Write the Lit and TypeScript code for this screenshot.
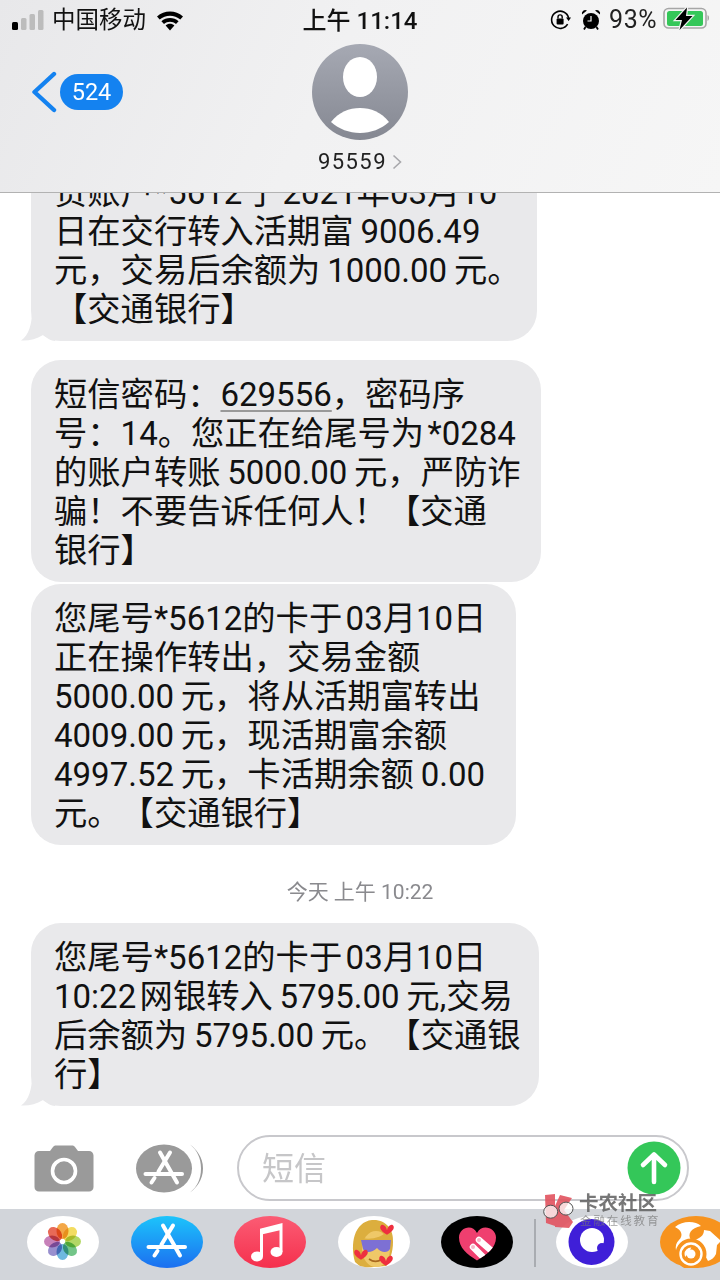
import { LitElement, html, css, svg } from "lit";
import { customElement } from "lit/decorators.js";

const H = "\u200A";
const T = "\u2009";

const tail = html`<svg class="tail" viewBox="0 0 34 30"><path d="M11 0C11 13 8 24 0 29.5C8 30 15 28 22 24C26 27 30 30 34 30V0Z" fill="#e9e9eb"/></svg>`;

const appStoreGlyph = (c: string) => svg`<g stroke="${c}" stroke-width="4" stroke-linecap="round" fill="none"><path d="M32 9.500L49 39.500"/><path d="M42 9.500L30.500 28.500"/><path d="M26.500 35L23.500 39.500"/><path d="M17.500 31H54"/></g>`;

const petals = ["#f29b2e", "#f2d84b", "#a8d24f", "#5fbd78", "#5aaedb", "#8a80c8", "#c070b0", "#e5553f"];

const heart = (x: number, y: number, s: number) => svg`<path transform="translate(${x} ${y}) scale(${s})" d="M0 6C-1-1-7-4-9 0C-11 4-6 9 0 12C6 9 11 4 9 0C7-4 1-1 0 6Z" fill="#ee2f3f"/>`;

/* Latin runs are set a little smaller than the CJK text around them, as on the phone. */
const runs = (text: string) =>
  text.split(/([0-9*.:,]+)/).map((part, i) => (i % 2 ? html`<span class="n">${part}</span>` : part));

@customElement("app-root")
export class AppRoot extends LitElement {
  static styles = css`
    :host { display: block; width: 720px; height: 1280px; overflow: hidden; position: relative; background: #fff; font-family: Roboto, "Noto Sans CJK SC", sans-serif; color: #111; text-spacing-trim: space-all; }
    .header { height: 192px; border-bottom: 1px solid #b2b2b2; background: linear-gradient(115deg, #e8e8ea 0%, #f1f1f2 45%, #f6f6f6 100%); display: flex; flex-direction: column; }
    .status { height: 36px; display: grid; grid-template-columns: 1fr auto 1fr; align-items: center; padding: 0 12px; font-size: 24px; }
    .s-left, .s-right { display: flex; align-items: center; }
    .s-left svg, .lock, .alarm { margin-top: 3px; }
    .s-right { justify-content: flex-end; }
    .carrier { margin: 0 10px 0 8px; font-size: 23.5px; }
    .time { font-size: 24px; font-weight: 500; }
    .pct { font-size: 25px; letter-spacing: 0.5px; margin: 3px 5px 0 8px; color: #222; }
    .lock { margin-right: 10px; }
    .battery { margin-right: -1px; }
    .nav { display: grid; grid-template-columns: 1fr auto 1fr; margin-top: 8px; padding: 0 20px; }
    .back { display: flex; align-items: center; height: 96px; gap: 3px; padding-left: 11px; }
    .badge { background: #1482f0; color: #fff; border-radius: 18px; width: 63px; height: 36px; display: flex; align-items: center; justify-content: center; font-size: 23.5px; }
    .contact { display: flex; flex-direction: column; align-items: center; }
    .avatar { display: block; }
    .name { font-size: 22px; margin-top: 10px; line-height: 24px; display: flex; align-items: center; gap: 5px; color: #222; letter-spacing: 1.4px; }
    .thread { height: 929px; overflow: hidden; padding-left: 31px; display: flex; flex-direction: column; align-items: flex-start; }
    .bubble { position: relative; background: #e9e9eb; border-radius: 30px; padding: 15px 0 12px 23px; font-size: 33.3px; line-height: 39px; white-space: nowrap; box-sizing: border-box; flex: none; }
    .bubble span.l { display: block; height: 39px; }
    .n { font-size: 33px; }
    .w1 { width: 506px; }
    .w2 { width: 510px; }
    .w3 { width: 485px; }
    .w4 { width: 508px; }
    .u { text-decoration: underline; text-decoration-color: #999; text-underline-offset: 4px; text-decoration-thickness: 1.5px; }
    .tail { position: absolute; left: -10px; bottom: 0; width: 34px; height: 30px; }
    .first { margin-top: -35px; }
    .g19 { margin-top: 19px; }
    .g3 { margin-top: 2px; }
    .stamp { align-self: center; margin: 33px 0 17px -31px; height: 28px; line-height: 28px; font-size: 21px; color: #8a8a8e; }
    .compose { height: 87px; display: flex; align-items: flex-start; padding: 13px 0 0 34px; box-sizing: border-box; }
    .input { margin-left: 33px; width: 452px; height: 66px; border: 2px solid #c8c8cc; border-radius: 33px; box-sizing: border-box; display: flex; align-items: center; justify-content: space-between; padding: 0 6px 0 23px; font-size: 32px; color: #c6c6c8; }
    .input span { margin-top: -5px; }
    .compose .cam { margin-top: 10px; }
    .compose .store { margin: 9px 0 0 42px; }
    .dock { height: 71px; background: #d2d5da; display: flex; align-items: flex-start; padding: 7px 0 0 27px; gap: 31.5px; overflow: hidden; }
    .app { width: 72px; height: 52px; flex: none; display: block; }
    .sep { width: 2px; height: 48px; background: #a9acb1; margin: 3px -11px 0 -11px; flex: none; }
    .mark { position: absolute; left: 540px; top: 1193px; display: flex; gap: 3px; pointer-events: none; }
    .mark-text { display: flex; flex-direction: column; margin-top: 1px; }
    .mark-a { font-size: 19.5px; line-height: 20px; font-weight: 700; color: rgba(95, 95, 95, 0.85); }
    .mark-b { font-size: 11.5px; line-height: 14px; color: rgba(120, 120, 120, 0.7); letter-spacing: 1.9px; margin-left: 1px; }
  `;

  private bubble(lines: unknown[], cls: string, hasTail = false) {
    return html`<div class="bubble ${cls}">${lines.map((l) => html`<span class="l">${typeof l === "string" ? runs(l) : l}</span>`)}${hasTail ? tail : ""}</div>`;
  }

  render() {
    return html`
      <div class="header">
        <div class="status">
          <div class="s-left">
            <svg width="32" height="22" viewBox="0 0 32 22"><rect x="0" y="13" width="6" height="8" rx="1.5" fill="#000"/><rect x="9" y="9" width="5.5" height="12" rx="1.5" fill="#bcbcbc"/><rect x="17.5" y="5" width="5.5" height="16" rx="1.5" fill="#bcbcbc"/><rect x="26" y="1" width="5.5" height="20" rx="1.5" fill="#bcbcbc"/></svg>
            <span class="carrier">中国移动</span>
            <svg width="28" height="22" viewBox="0 0 28 22"><path d="M14 21.5L9.6 16.4C12 14.2 16 14.2 18.4 16.4Z" fill="#000"/><path d="M1 7.6C8.2 .8 19.8 .8 27 7.6L24.3 10.6C18.6 5.3 9.4 5.3 3.7 10.6Z" fill="#000"/><path d="M5.4 12.2C10.2 7.8 17.8 7.8 22.6 12.2L20 15.1C16.5 12 11.5 12 8 15.1Z" fill="#000"/></svg>
          </div>
          <div class="time">上午 11:14</div>
          <div class="s-right">
            <svg class="lock" width="21" height="22" viewBox="0 0 21 22"><path d="M17.6 15.2A8.6 8.6 0 1 1 18.6 9" fill="none" stroke="#000" stroke-width="1.6"/><path d="M16 8.4L21 8.4L18.6 12Z" fill="#000"/><rect x="6.6" y="9.4" width="7" height="6" rx="1" fill="#000"/><path d="M8 9.6V8a2.1 2.1 0 0 1 4.2 0V9.6" fill="none" stroke="#000" stroke-width="1.4"/></svg>
            <svg class="alarm" width="20" height="22" viewBox="0 0 20 22"><circle cx="10" cy="12" r="8" fill="#000"/><path d="M1 5.5A3.4 3.4 0 0 1 6 1.6ZM19 5.5A3.4 3.4 0 0 0 14 1.6Z" fill="#000"/><path d="M10 7V12H6.5" fill="none" stroke="#fff" stroke-width="1.2"/><path d="M4.5 18L3 20.5M15.5 18L17 20.5" stroke="#000" stroke-width="1.8"/></svg>
            <span class="pct">93%</span>
            <svg class="battery" width="47" height="24" viewBox="0 0 47 24"><rect x="2" y="2.500" width="42" height="19.500" rx="4.500" fill="none" stroke="#a6a6a6" stroke-width="1.6"/><rect x="5" y="5" width="36" height="15" rx="2.500" fill="#35c759"/><path d="M45.500 9V15C46.600 14.600 47 13.400 47 12C47 10.600 46.600 9.400 45.500 9Z" fill="#a6a6a6"/><path d="M25 1.500L13.500 14H20L17.500 24L30.500 10H24Z" fill="#000" stroke="#f2f2f2" stroke-width="2.400" paint-order="stroke"/></svg>
          </div>
        </div>
        <div class="nav">
          <div class="back">
            <svg width="26" height="42" viewBox="0 0 26 42"><path d="M23 3L3.5 21L23 39" fill="none" stroke="#1482f0" stroke-width="4.4" stroke-linecap="round" stroke-linejoin="round"/></svg>
            <div class="badge">524</div>
          </div>
          <div class="contact">
            <svg class="avatar" width="96" height="96" viewBox="0 0 96 96">
              <defs>
                <linearGradient id="av" x1="0" y1="0" x2="0" y2="1"><stop offset="0" stop-color="#a6a9b3"/><stop offset="1" stop-color="#858892"/></linearGradient>
                <clipPath id="avc"><circle cx="48" cy="48" r="48"/></clipPath>
              </defs>
              <circle cx="48" cy="48" r="48" fill="url(#av)"/>
              <ellipse cx="48" cy="33" rx="17" ry="20" fill="#fff"/>
              <path d="M19 78C27 68 37 64 48 64C59 64 69 68 77 78C69 85 59 89 48 89C37 89 27 85 19 78Z" fill="#fff" clip-path="url(#avc)"/>
            </svg>
            <div class="name">95559<svg width="10" height="16" viewBox="0 0 10 16"><path d="M1.5 1.5L8.5 8L1.5 14.5" fill="none" stroke="#a8a8ac" stroke-width="1.6"/></svg></div>
          </div>
          <div></div>
        </div>
      </div>
      <div class="thread">
        ${this.bubble([`贵账户*5612${H}于${H}2021年03月10`, `日在交行转入活期富${T}9006.49`, `元，交易后余额为${T}1000.00${T}元。`, "【交通银行】"], "first w1", true)}
        ${this.bubble([html`短信密码：<span class="u n">629556</span>，密码序`, `号：14。您正在给尾号为${H}*0284`, `的账户转账${T}5000.00${T}元，严防诈`, "骗！不要告诉任何人！【交通", "银行】"], "g19 w2")}
        ${this.bubble([`您尾号*5612的卡于${H}03月10日`, "正在操作转出，交易金额", `5000.00${T}元，将从活期富转出`, `4009.00${T}元，现活期富余额`, `4997.52${T}元，卡活期余额${T}0.00`, "元。【交通银行】"], "g3 w3")}
        <div class="stamp">今天 上午 10:22</div>
        ${this.bubble([`您尾号*5612的卡于${H}03月10日`, `10:22${H}网银转入${T}5795.00${T}元,交易`, `后余额为${T}5795.00${T}元。【交通银`, "行】"], "w4", true)}
      </div>
      <div class="compose">
        <svg class="cam" width="60" height="48" viewBox="0 0 60 48"><path d="M5 6H16L19 2C20 .8 21 .5 22 .5H38C39 .5 40 .8 41 2L44 6H55C57.5 6 59.5 8 59.5 10.5V42C59.5 44.8 57.5 46.5 55 46.5H5C2.5 46.5 .5 44.8 .5 42V10.5C.5 8 2.5 6 5 6Z" fill="#9a9a9a"/><circle cx="30" cy="26" r="11.5" fill="none" stroke="#fff" stroke-width="3.6"/></svg>
        <svg class="store" width="68" height="50" viewBox="0 0 68 50"><path d="M54 .5C61 6 65 14 65 24.500C65 35 61 43 54 48.500C60 44 67 36 67 24.500C67 13 60 5 54 .5Z" fill="#9a9a9a"/><ellipse cx="28" cy="24.500" rx="28" ry="24" fill="#9a9a9a"/><g transform="translate(-8 -1)">${appStoreGlyph("#fff")}</g></svg>
        <div class="input">
          <span>短信</span>
          <svg width="54" height="54" viewBox="0 0 54 54"><circle cx="27" cy="27" r="26.500" fill="#34c759"/><path d="M27 41V14M16 24L27 13.500L38 24" fill="none" stroke="#fff" stroke-width="4.600" stroke-linecap="round" stroke-linejoin="round"/></svg>
        </div>
      </div>
      <div class="dock">
        <svg class="app" viewBox="0 0 72 52"><ellipse cx="36" cy="26" rx="36" ry="26" fill="#fff"/>
          ${petals.map((c, i) => svg`<ellipse cx="35.500" cy="15" rx="6" ry="8" fill="${c}" opacity="0.88" style="mix-blend-mode:multiply" transform="rotate(${i * 45} 35.500 25.500)"/>`)}
        </svg>
        <svg class="app" viewBox="0 0 72 52"><defs><linearGradient id="bl" x1="0" y1="0" x2="0" y2="1"><stop offset="0" stop-color="#1cc4fb"/><stop offset="1" stop-color="#1c6ff0"/></linearGradient></defs><ellipse cx="36" cy="26" rx="36" ry="26" fill="url(#bl)"/>${appStoreGlyph("#fff")}</svg>
        <svg class="app" viewBox="0 0 72 52"><defs><linearGradient id="rd" x1="0" y1="0" x2="0" y2="1"><stop offset="0" stop-color="#fb5c74"/><stop offset="1" stop-color="#f5304d"/></linearGradient></defs><ellipse cx="36" cy="26" rx="36" ry="26" fill="url(#rd)"/><path d="M27.500 40V14L47 9V36" fill="none" stroke="#fff" stroke-width="3"/><path d="M27.500 13L47 8.500V14L27.500 18.500Z" fill="#fff"/><ellipse cx="23" cy="40.500" rx="6" ry="5" fill="#fff"/><ellipse cx="42.500" cy="36" rx="6" ry="5" fill="#fff"/></svg>
        <svg class="app" viewBox="0 0 72 52"><defs><clipPath id="mj"><ellipse cx="36" cy="26" rx="36" ry="26"/></clipPath></defs><ellipse cx="36" cy="26" rx="36" ry="26" fill="#fff"/><g clip-path="url(#mj)"><path d="M17 46C12 28 16 6 34 4C48 3 56 14 55 26C55 36 52 44 48 50L24 52Z" fill="#dcae3e"/><ellipse cx="38" cy="33" rx="14" ry="18" fill="#efc868"/><path d="M24 22C32 24 44 22 50 14C54 18 54 22 53 26L24 27Z" fill="#dcae3e"/><path d="M23 24H53L52 33C50 37 43 37 39 32C34 37 27 37 25 33Z" fill="#7d70d4"/><path d="M31 43C35 46 40 46 44 43" stroke="#a9691f" stroke-width="1.6" fill="none"/></g>${heart(49, 10, 0.72)}${heart(23, 35, 0.72)}${heart(48, 41, 0.72)}</svg>
        <svg class="app" viewBox="0 0 72 52"><defs><clipPath id="hc"><path d="M36 44.500C26 38 18 32 18 21.500C18 12 31 7 36 17C41 7 55 12 55 21.500C55 32 46 38 36 44.500Z"/></clipPath></defs><ellipse cx="36" cy="26" rx="36" ry="26" fill="#000"/><path d="M36 44.500C26 38 18 32 18 21.500C18 12 31 7 36 17C41 7 55 12 55 21.500C55 32 46 38 36 44.500Z" fill="#ef3f6f"/><g clip-path="url(#hc)"><path d="M38 24L53 37M32 31L45 44" stroke="#fff" stroke-width="6.500" stroke-linecap="round"/></g><circle cx="38" cy="24" r="2" fill="#f7b6c8"/><circle cx="32" cy="31" r="2" fill="#f7b6c8"/></svg>
        <div class="sep"></div>
        <svg class="app" viewBox="0 0 72 52"><ellipse cx="36" cy="26" rx="36" ry="26" fill="#fff"/><circle cx="35.500" cy="26" r="23" fill="#3f1fd8"/><circle cx="36" cy="24" r="12" fill="#fff"/><circle cx="46" cy="32" r="5" fill="#3f1fd8"/></svg>
        <svg class="app" viewBox="0 0 72 52"><ellipse cx="36" cy="26" rx="36" ry="26" fill="#f7931e"/><path d="M15 11C23 4 36 5 41 10C31 12 27 18 31 24C35 29 28 38 22 45C16 38 13 30 19 24C24 19 21 14 15 11Z" fill="#fff"/><path d="M31 26C40 22 44 20 44 14L50 15L61 25L57 29L56 38C54 42 51 44 48 45L38 26Z" fill="#fff"/><circle cx="31" cy="38" r="11" fill="none" stroke="#f7931e" stroke-width="9"/><circle cx="31" cy="38" r="10.500" fill="none" stroke="#fff" stroke-width="2.400"/><circle cx="31" cy="38" r="4.500" fill="#fff"/></svg>
      </div>
      <div class="mark">
        <svg width="36" height="36" viewBox="0 0 36 36"><g fill="#e2535f" opacity="0.9"><path d="M5 2L15 1L15 33L6 30Z"/><path d="M15 13L20 2L32 5L24 17L33 29L29 35L15 34Z"/></g><g fill="rgba(255,255,255,0.75)" stroke="#555" stroke-width="1"><ellipse cx="10.700" cy="18.700" rx="7" ry="6.500"/><ellipse cx="26" cy="15.600" rx="7" ry="6.500"/></g></svg>
        <div class="mark-text"><span class="mark-a">卡农社区</span><span class="mark-b">金融在线教育</span></div>
      </div>
    `;
  }
}
